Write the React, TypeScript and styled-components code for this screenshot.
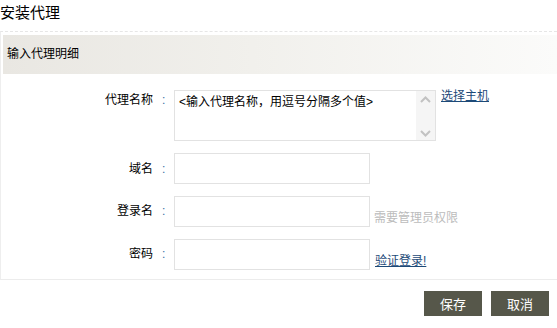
import styled, { createGlobalStyle } from 'styled-components';

const GlobalStyle = createGlobalStyle`
  html, body {
    margin: 0;
    padding: 0;
    background: #fff;
  }
  body {
    font-family: "Liberation Sans", "Noto Sans CJK SC", sans-serif;
    font-size: 12px;
    color: #000;
  }
`;

const Page = styled.div`
  width: 557px;
`;

const Title = styled.h1`
  margin: 0;
  height: 31px;
  font-size: 15px;
  font-weight: normal;
  line-height: 26px;
`;

const Panel = styled.div`
  border-top: 1px dashed #e6e6e6;
  border-left: 1px solid #eeeeee;
  border-bottom: 1px solid #ececec;
  padding-top: 3px;
  padding-bottom: 9px;
`;

const PanelHeader = styled.div`
  margin-left: 2px;
  height: 39px;
  line-height: 39px;
  padding-left: 4px;
  background: linear-gradient(to right, #e9e7e2 0%, #f1f0ec 45%, #fbfbfa 100%);
`;

const Form = styled.div`
  display: flex;
  flex-direction: column;
  gap: 12px;
  padding-top: 16px;
`;

const Row = styled.div`
  display: flex;
  align-items: flex-start;
`;

const Label = styled.label<{ $top: number }>`
  width: 152px;
  text-align: right;
  padding-top: ${(p) => p.$top}px;
  line-height: 18px;
`;

const Colon = styled.span<{ $top: number }>`
  width: 21px;
  padding-left: 9px;
  box-sizing: border-box;
  padding-top: ${(p) => p.$top}px;
  line-height: 18px;
  color: #3c6fa3;
`;

const TextBox = styled.div`
  display: flex;
  width: 262px;
  height: 51px;
  box-sizing: border-box;
  border: 1px solid #e2e2e2;
  background: #fff;
`;

const Area = styled.textarea`
  flex: 1;
  border: none;
  outline: none;
  resize: none;
  padding: 3px 4px;
  font: inherit;
  line-height: 16px;
  color: #000;
  overflow: hidden;
`;

const ScrollTrack = styled.div`
  width: 19px;
  background: #f5f5f5;
  display: flex;
  flex-direction: column;
  justify-content: space-between;
  align-items: center;
  padding: 5px 0 3px;
`;

const Input = styled.input`
  width: 196px;
  height: 31px;
  box-sizing: border-box;
  border: 1px solid #e2e2e2;
  outline: none;
  padding: 0 4px;
  font: inherit;
`;

const LinkText = styled.a<{ $bottom?: boolean }>`
  margin-left: 5px;
  color: #1d4a78;
  text-decoration: underline;
  line-height: 14px;
  cursor: pointer;
  align-self: ${(p) => (p.$bottom ? 'flex-end' : 'flex-start')};
  margin-bottom: ${(p) => (p.$bottom ? '2px' : '0')};
  margin-top: ${(p) => (p.$bottom ? '0' : '-1px')};
`;

const Hint = styled.span`
  margin-left: 4px;
  color: #bcbcbc;
  align-self: flex-end;
  margin-bottom: 1px;
  line-height: 16px;
`;

const Actions = styled.div`
  display: flex;
  justify-content: flex-end;
  gap: 9px;
  padding: 11px 8px 0 0;
`;

const Button = styled.button`
  width: 58px;
  height: 25px;
  border: none;
  background: #56574a;
  color: #fff;
  font: inherit;
  font-size: 13px;
  cursor: pointer;
  padding: 0;
`;

const Chevron = ({ up }: { up?: boolean }) => (
  <svg width="11" height="7" viewBox="0 0 11 7">
    <path
      d={up ? 'M1 6 L5.5 1.5 L10 6' : 'M1 1 L5.5 5.5 L10 1'}
      fill="none"
      stroke="#c2c2c2"
      strokeWidth="2"
    />
  </svg>
);

function App() {
  return (
    <Page>
      <GlobalStyle />
      <Title>安装代理</Title>
      <Panel>
        <PanelHeader>输入代理明细</PanelHeader>
        <Form>
          <Row>
            <Label $top={1}>代理名称</Label>
            <Colon $top={1}>:</Colon>
            <TextBox>
              <Area defaultValue="<输入代理名称，用逗号分隔多个值>" />
              <ScrollTrack>
                <Chevron up />
                <Chevron />
              </ScrollTrack>
            </TextBox>
            <LinkText>选择主机</LinkText>
          </Row>
          <Row>
            <Label $top={7}>域名</Label>
            <Colon $top={7}>:</Colon>
            <Input />
          </Row>
          <Row>
            <Label $top={6}>登录名</Label>
            <Colon $top={6}>:</Colon>
            <Input />
            <Hint>需要管理员权限</Hint>
          </Row>
          <Row>
            <Label $top={6}>密码</Label>
            <Colon $top={6}>:</Colon>
            <Input type="password" />
            <LinkText $bottom>验证登录!</LinkText>
          </Row>
        </Form>
      </Panel>
      <Actions>
        <Button>保存</Button>
        <Button>取消</Button>
      </Actions>
    </Page>
  );
}

export default App;
